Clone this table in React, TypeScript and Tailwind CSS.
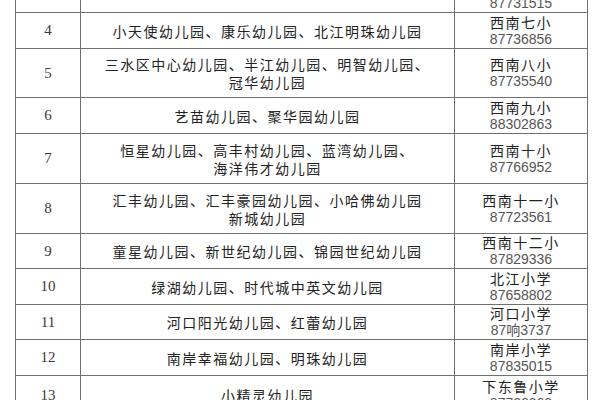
const rows: { no: string; names: string[]; school: string; phone: string; h: string }[] = [
  { no: "3", names: [""], school: "西南六小", phone: "87731515", h: "h-[36px]" },
  { no: "4", names: ["小天使幼儿园、康乐幼儿园、北江明珠幼儿园"], school: "西南七小", phone: "87736856", h: "h-[36px]" },
  { no: "5", names: ["三水区中心幼儿园、半江幼儿园、明智幼儿园、", "冠华幼儿园"], school: "西南八小", phone: "87735540", h: "h-[49px]" },
  { no: "6", names: ["艺苗幼儿园、聚华园幼儿园"], school: "西南九小", phone: "88302863", h: "h-[36px]" },
  { no: "7", names: ["恒星幼儿园、高丰村幼儿园、蓝湾幼儿园、", "海洋伟才幼儿园"], school: "西南十小", phone: "87766952", h: "h-[50px]" },
  { no: "8", names: ["汇丰幼儿园、汇丰豪园幼儿园、小哈佛幼儿园", "新城幼儿园"], school: "西南十一小", phone: "87723561", h: "h-[50px]" },
  { no: "9", names: ["童星幼儿园、新世纪幼儿园、锦园世纪幼儿园"], school: "西南十二小", phone: "87829336", h: "h-[35px]" },
  { no: "10", names: ["绿湖幼儿园、时代城中英文幼儿园"], school: "北江小学", phone: "87658802", h: "h-[36px]" },
  { no: "11", names: ["河口阳光幼儿园、红蕾幼儿园"], school: "河口小学", phone: "87响3737", h: "h-[35px]" },
  { no: "12", names: ["南岸幸福幼儿园、明珠幼儿园"], school: "南岸小学", phone: "87835015", h: "h-[36px]" },
  { no: "13", names: ["小精灵幼儿园"], school: "下东鲁小学", phone: "87736060", h: "h-[39px]" },
];

export default function App() {
  return (
    <div className="h-[400px] w-[600px] overflow-hidden bg-white pl-[15px]">
      <table className="-mt-[24px] w-[572px] table-fixed border-collapse">
        <colgroup>
          <col className="w-[65px]" />
          <col className="w-[374px]" />
          <col className="w-[133px]" />
        </colgroup>
        <tbody>
          {rows.map((r) => (
            <tr key={r.no} className={r.h}>
              <td className="border border-[#707070] text-center align-middle font-['Liberation_Serif',serif] text-[15px] text-[#3a3a3a]">
                {r.no}
              </td>
              <td className="border border-[#707070] text-center align-middle font-['Noto_Sans_CJK_SC',sans-serif] text-[14px] leading-[18px] tracking-[1.5px] text-[#222]">
                {r.names.map((n, i) => (
                  <div key={i}>{n}</div>
                ))}
              </td>
              <td className="border border-[#707070] text-center align-middle leading-[17px]">
                <div className="font-['Noto_Sans_CJK_SC',sans-serif] text-[14px] tracking-[1.5px] text-[#222]">{r.school}</div>
                <div className="font-['Liberation_Sans','Noto_Sans_CJK_SC',sans-serif] text-[14px] text-[#555]">{r.phone}</div>
              </td>
            </tr>
          ))}
        </tbody>
      </table>
    </div>
  );
}
